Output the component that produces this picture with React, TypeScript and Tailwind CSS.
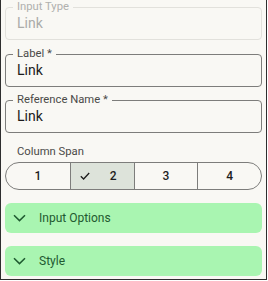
import React from "react";

function Field({ label, value, disabled }: { label: string; value: string; disabled?: boolean }) {
  return (
    <fieldset
      className={
        "min-w-0 rounded-[4px] border px-[7px] pb-[6px] " +
        (disabled ? "border-[#e2e1dc]" : "border-[#7d7d7b]")
      }
    >
      <legend
        className={
          "px-[4px] text-[11.25px] leading-[12px] " + (disabled ? "text-[#b0b0ae]" : "text-[#4a4a48]")
        }
      >
        {label}
      </legend>
      <div
        className={
          "px-[4px] text-[14px] leading-[20px] " + (disabled ? "text-[#ababa9]" : "text-[#1b1b1b]")
        }
      >
        {value}
      </div>
    </fieldset>
  );
}

function Chevron() {
  return (
    <svg width="13" height="8" viewBox="0 0 13 8" fill="none">
      <polyline points="1,1.2 6.5,6.6 12,1.2" stroke="#1f5a30" strokeWidth="1.5" />
    </svg>
  );
}

function Accordion({ title }: { title: string }) {
  return (
    <div className="flex h-[30px] items-center rounded-[6px] bg-[#a9f5b1] pl-[8px]">
      <Chevron />
      <span className="ml-[13px] text-[12px] text-[#1f5a30]">{title}</span>
    </div>
  );
}

export default function App() {
  return (
    <div className="bg-white" style={{ fontFamily: "Roboto, 'Noto Sans', sans-serif" }}>
      <div className="flex h-[280px] w-[267px] flex-col border-x border-b border-[#2e2e2e] bg-[#f9f8f4] px-1 pt-[1px]">
        <Field label="Input Type" value="Link" disabled />
        <div className="mt-[8px]">
          <Field label="Label *" value="Link" />
        </div>
        <div className="mt-[7px]">
          <Field label="Reference Name *" value="Link" />
        </div>
        <div className="ml-[12px] mt-[11px] text-[11.25px] leading-[16px] text-[#4a4a48]">Column Span</div>
        <div className="mt-[2px] grid h-[28px] grid-cols-4 overflow-hidden rounded-full border border-[#7d7d7b] text-[12px] font-medium text-[#1d1d1d]">
          <div className="flex items-center justify-center">1</div>
          <div className="flex items-center border-l border-[#7d7d7b] bg-[#dde3da] pl-[9px]">
            <svg width="10" height="8" viewBox="0 0 10 8" fill="none">
              <polyline points="0.8,4.2 3.6,7 9.2,1" stroke="#1d1d1d" strokeWidth="1.3" />
            </svg>
            <span className="ml-[20px]">2</span>
          </div>
          <div className="flex items-center justify-center border-l border-[#7d7d7b]">3</div>
          <div className="flex items-center justify-center border-l border-[#7d7d7b]">4</div>
        </div>
        <div className="mt-[13px]">
          <Accordion title="Input Options" />
        </div>
        <div className="mt-[13px]">
          <Accordion title="Style" />
        </div>
      </div>
    </div>
  );
}
